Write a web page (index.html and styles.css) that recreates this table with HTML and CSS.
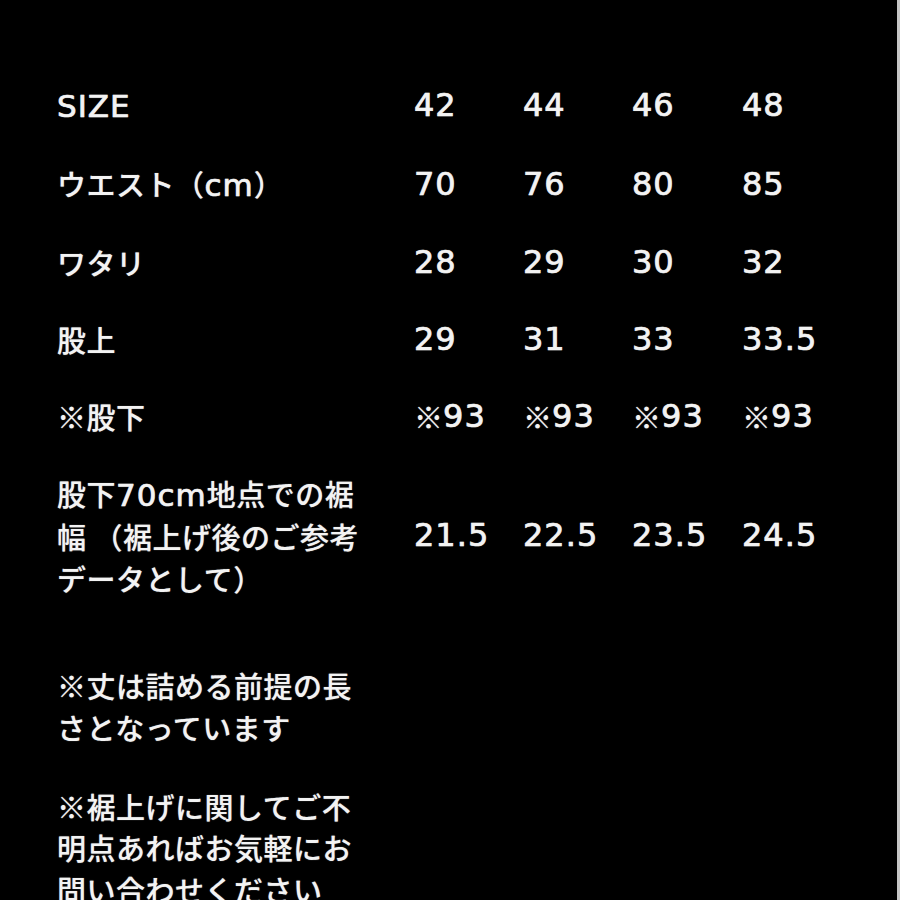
FILE: index.html
```html
<!DOCTYPE html>
<html lang="ja">
<head>
<meta charset="utf-8">
<title>サイズ表</title>
<link rel="stylesheet" href="styles.css">
</head>
<body>
<div class="page">
  <div class="sizes">
    <div class="label"><span class="lat">SIZE</span></div>
    <div class="val">42</div><div class="val">44</div><div class="val">46</div><div class="val">48</div>

    <div class="label">ウエスト（<span class="lat">cm</span>）</div>
    <div class="val">70</div><div class="val">76</div><div class="val">80</div><div class="val">85</div>

    <div class="label">ワタリ</div>
    <div class="val">28</div><div class="val">29</div><div class="val">30</div><div class="val">32</div>

    <div class="label">股上</div>
    <div class="val">29</div><div class="val">31</div><div class="val">33</div><div class="val">33.5</div>

    <div class="label">※股下</div>
    <div class="val"><span class="mark">※</span>93</div><div class="val"><span class="mark">※</span>93</div><div class="val"><span class="mark">※</span>93</div><div class="val"><span class="mark">※</span>93</div>

    <div class="label">股下<span class="lat">70cm</span>地点での裾<br>幅 （裾上げ後のご参考<br>データとして）</div>
    <div class="val">21.5</div><div class="val">22.5</div><div class="val">23.5</div><div class="val">24.5</div>
  </div>

  <p class="note">※丈は詰める前提の長<br>さとなっています</p>
  <p class="note">※裾上げに関してご不<br>明点あればお気軽にお<br>問い合わせください</p>
</div>
</body>
</html>
```

FILE: styles.css
```css
html, body {
  margin: 0;
  padding: 0;
  background: #000;
}

.page {
  box-sizing: border-box;
  width: 900px;
  height: 900px;
  overflow: hidden;
  padding: 66px 0 0 57px;
  border-right: 3px solid #c6c6c6;
  color: #f3f3f3;
  font-family: "Noto Sans CJK JP", sans-serif;
  font-weight: 500;
  font-size: 29px;
  letter-spacing: 0.5px;
  line-height: 41.5px;
  text-shadow: 0 0 1px rgba(255, 255, 255, 0.6);
}

.sizes {
  display: grid;
  grid-template-columns: 357px 109px 109px 110px 110px;
}

.label,
.val {
  padding: 17.75px 0;
  white-space: nowrap;
}

.val {
  font-family: "DejaVu Sans", "Noto Sans CJK JP", sans-serif;
  font-size: 32px;
  letter-spacing: 1px;
  display: flex;
  align-items: center;
  -webkit-text-stroke: 0.6px #f3f3f3;
}

.lat {
  font-family: "DejaVu Sans", sans-serif;
  font-size: 31px;
  letter-spacing: 1px;
  -webkit-text-stroke: 0.6px #f3f3f3;
}

.mark {
  font-family: "Noto Sans CJK JP", sans-serif;
  font-size: 29px;
  letter-spacing: 0;
  -webkit-text-stroke: 0;
}

.note {
  margin: 48px 0 0;
}

.note + .note {
  margin-top: 37.5px;
}
```
